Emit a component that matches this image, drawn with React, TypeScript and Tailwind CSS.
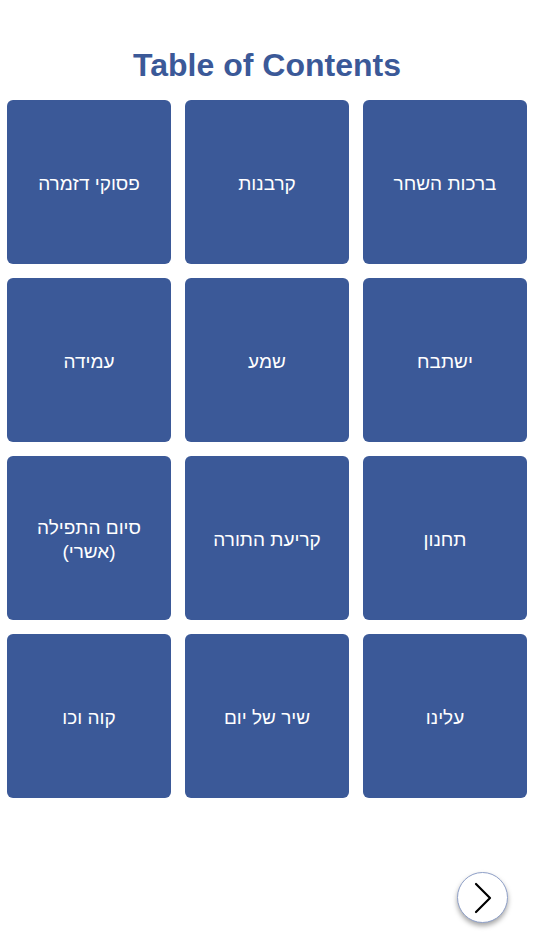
import React from "react";

const items = [
  ["ברכות השחר"],
  ["קרבנות"],
  ["פסוקי דזמרה"],
  ["ישתבח"],
  ["שמע"],
  ["עמידה"],
  ["תחנון"],
  ["קריעת התורה"],
  ["סיום התפילה", "(אשרי)"],
  ["עלינו"],
  ["שיר של יום"],
  ["קוה וכו"],
];

export default function App() {
  return (
    <div
      className="relative w-[534px] h-[950px] bg-white overflow-hidden"
      style={{ fontFamily: '"Liberation Sans", Arial, sans-serif' }}
    >
      <h1 className="pt-[49px] text-center text-[32px] leading-[32px] font-bold text-[#3b5998]">
        Table of Contents
      </h1>
      <div dir="rtl" className="mt-[19px] px-[7px] grid grid-cols-3 gap-[14px]">
        {items.map((lines, i) => (
          <div
            key={i}
            className="h-[164px] pt-[4px] rounded-[6px] bg-[#3b5998] flex flex-col items-center justify-center text-white text-[19px] leading-[24px] text-center"
          >
            {lines.map((l, j) => (
              <span key={j}>{l}</span>
            ))}
          </div>
        ))}
      </div>
      <button className="absolute right-[26px] bottom-[27px] w-[51px] h-[51px] rounded-full bg-white border border-[#8fa0c8] shadow-[0_3px_5px_rgba(0,0,0,0.35)] flex items-center justify-center">
        <svg width="20" height="32" viewBox="0 0 20 32" fill="none">
          <path d="M3 2 L17 16 L3 30" stroke="#000" strokeWidth="2.2" strokeLinecap="round" strokeLinejoin="round" />
        </svg>
      </button>
    </div>
  );
}
